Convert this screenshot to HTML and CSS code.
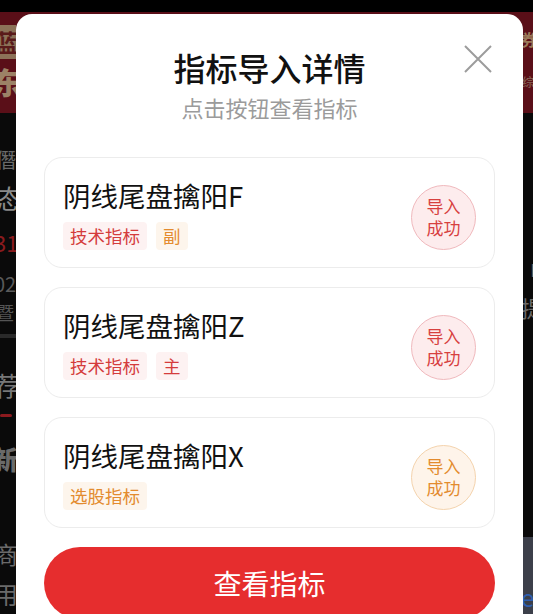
FILE: index.html
```html
<!DOCTYPE html>
<html lang="zh-CN">
<head>
<meta charset="utf-8">
<title>指标导入详情</title>
<link rel="stylesheet" href="styles.css">
</head>
<body>
<div class="page">
  <div class="topbar"></div>
  <div class="banner">
    <div class="banner-left">
      <span class="logo-box">蓝</span>
      <span class="logo-text">东</span>
    </div>
    <div class="banner-right">
      <span class="br-big">券</span>
      <span class="br-small">综</span>
    </div>
  </div>
  <div class="content">
    <div class="col-left">
      <span class="g g1">僭</span>
      <span class="g g2">态</span>
      <span class="g g3">31</span>
      <span class="g g4">02</span>
      <span class="g g5">暨</span>
      <span class="sep"></span>
      <span class="g g6">荐</span>
      <span class="red-line"></span>
      <span class="g g7">新</span>
      <span class="g g8">商</span>
      <span class="g g9">用</span>
    </div>
    <div class="col-right">
      <span class="r r1">刂</span>
      <span class="r r2">提</span>
      <span class="r-box"><span class="r-e">e</span></span>
    </div>
  </div>
</div>

<div class="modal">
  <button class="close" aria-label="关闭">
    <svg width="28" height="28" viewBox="0 0 28 28"><path d="M1 1 L27 27 M27 1 L1 27" stroke="#9c9c9c" stroke-width="2" fill="none"/></svg>
  </button>
  <h1 class="title">指标导入详情</h1>
  <p class="subtitle">点击按钮查看指标</p>

  <div class="cards">
    <div class="card">
      <div class="info">
        <div class="name">阴线尾盘擒阳F</div>
        <div class="tags">
          <span class="tag tag-red">技术指标</span>
          <span class="tag tag-orange">副</span>
        </div>
      </div>
      <div class="badge badge-red">导入<br>成功</div>
    </div>
    <div class="card">
      <div class="info">
        <div class="name">阴线尾盘擒阳Z</div>
        <div class="tags">
          <span class="tag tag-red">技术指标</span>
          <span class="tag tag-red">主</span>
        </div>
      </div>
      <div class="badge badge-red">导入<br>成功</div>
    </div>
    <div class="card">
      <div class="info">
        <div class="name">阴线尾盘擒阳X</div>
        <div class="tags">
          <span class="tag tag-orange">选股指标</span>
        </div>
      </div>
      <div class="badge badge-orange">导入<br>成功</div>
    </div>
  </div>

  <button class="primary">查看指标</button>
</div>
</body>
</html>
```

FILE: styles.css
```css
* { box-sizing: border-box; }
html, body {
  margin: 0;
  padding: 0;
  background: #0a0a0a;
  font-family: "Noto Sans CJK SC", "Noto Sans", sans-serif;
}
.page {
  width: 533px;
  height: 614px;
  overflow: hidden;
  display: flex;
  flex-direction: column;
}
.topbar { height: 12px; background: #000; }
.banner {
  height: 101px;
  background: #5a0f18;
  display: flex;
  justify-content: space-between;
}
.banner-left {
  display: flex;
  flex-direction: column;
  padding-top: 13px;
}
.logo-box {
  width: 16px;
  height: 34px;
  background: #8c7258;
  color: #5a1a1a;
  font-size: 24px;
  font-weight: 700;
  line-height: 34px;
  overflow: hidden;
  text-indent: -6px;
}
.logo-text {
  margin-top: 4px;
  width: 16px;
  overflow: hidden;
  color: #9c8266;
  font-size: 30px;
  font-weight: 900;
  line-height: 36px;
  text-indent: -8px;
}
.banner-right {
  width: 10px;
  display: flex;
  flex-direction: column;
  padding-top: 16px;
  overflow: hidden;
}
.br-big { color: #9a7a5a; font-size: 16px; font-weight: 700; line-height: 22px; margin-left: -2px; }
.br-small { color: #8a6a5a; font-size: 12px; line-height: 16px; margin-top: 24px; margin-left: -1px; }

.content {
  flex: 1;
  display: flex;
  justify-content: space-between;
}
.col-left {
  width: 16px;
  overflow: hidden;
  display: flex;
  flex-direction: column;
  padding-top: 35px;
}
.g { color: #6a6a6a; font-size: 20px; line-height: 24px; white-space: nowrap; margin-left: -4px; flex: none; }
.g2 { color: #8a8a8a; font-size: 26px; line-height: 30px; margin-top: 11px; }
.g3 { color: #8a1b1e; font-size: 22px; line-height: 24px; margin-top: 17px; margin-left: -6px; }
.g4 { color: #5a5a5a; font-size: 20px; line-height: 20px; margin-top: 20px; margin-left: -6px; }
.g5 { color: #555; font-size: 18px; line-height: 20px; margin-top: 8px; }
.sep { height: 4px; background: #2a2a2a; margin-top: 12px; flex: none; }
.g6 { color: #777; font-size: 26px; line-height: 30px; margin-top: 32px; margin-left: -6px; }
.red-line { width: 12px; height: 3px; background: #8c1a1e; margin-top: 14px; border-radius: 2px; flex: none; }
.g7 { color: #6a6a6a; font-size: 26px; font-weight: 900; line-height: 30px; margin-top: 27px; margin-left: -8px; }
.g8 { color: #6a6a6a; font-size: 24px; line-height: 30px; margin-top: 65px; margin-left: -6px; }
.g9 { color: #6a6a6a; font-size: 24px; line-height: 30px; margin-top: 10px; margin-left: -6px; }

.col-right {
  width: 10px;
  overflow: hidden;
  display: flex;
  flex-direction: column;
  padding-top: 143px;
}
.r { color: #6a6a6a; font-size: 22px; line-height: 28px; margin-left: -2px; flex: none; }
.r2 { margin-top: 9px; }
.r-box {
  margin-top: 216px;
  flex: 1;
  background: #3c3f4a;
}
.r-e { color: #2f5fb0; font-size: 24px; line-height: 24px; display: block; margin-top: 48px; margin-left: -2px; }

.modal {
  position: absolute;
  top: 14px;
  left: 16px;
  width: 507px;
  height: 640px;
  background: #fff;
  border-radius: 16px 16px 0 0;
  padding: 33px 28px 0 28px;
  display: flex;
  flex-direction: column;
}
.close {
  position: absolute;
  top: 31px;
  right: 31px;
  width: 28px;
  height: 28px;
  padding: 0;
  border: none;
  background: none;
}
.close svg { display: block; }
.title {
  margin: 0;
  text-align: center;
  font-size: 32px;
  line-height: 40px;
  font-weight: 500;
  color: #111;
}
.subtitle {
  margin: 6px 0 0;
  text-align: center;
  font-size: 22px;
  line-height: 28px;
  color: #9b9b9b;
}
.cards {
  margin-top: 36px;
  display: flex;
  flex-direction: column;
  gap: 19px;
}
.card {
  border: 1px solid #ececec;
  border-radius: 18px;
  padding: 20px 18px 17px 18px;
  display: flex;
  justify-content: space-between;
  align-items: center;
}
.name {
  font-size: 27.5px;
  line-height: 34px;
  color: #111;
}
.tags {
  margin-top: 10px;
  display: flex;
  gap: 9px;
}
.tag {
  height: 28px;
  line-height: 28px;
  padding: 0 7px;
  font-size: 17.5px;
  border-radius: 4px;
}
.tag-red { color: #d43c3c; background: #fdf2f2; }
.tag-orange { color: #e38b2e; background: #fdf5ec; }
.badge {
  width: 65px;
  height: 65px;
  border-radius: 50%;
  display: flex;
  align-items: center;
  justify-content: center;
  text-align: center;
  font-size: 17px;
  line-height: 22px;
  margin-top: 6px;
}
.badge-red { color: #d7403f; background: #fdeced; border: 1px solid #f0b9bd; }
.badge-orange { color: #e38b2e; background: #fef4ea; border: 1px solid #f4d3ad; }
.primary {
  margin-top: 19px;
  height: 72px;
  border: none;
  border-radius: 36px;
  background: #e62d2e;
  color: #fff;
  font-family: inherit;
  font-size: 28px;
  line-height: 72px;
  padding: 0;
}
```
